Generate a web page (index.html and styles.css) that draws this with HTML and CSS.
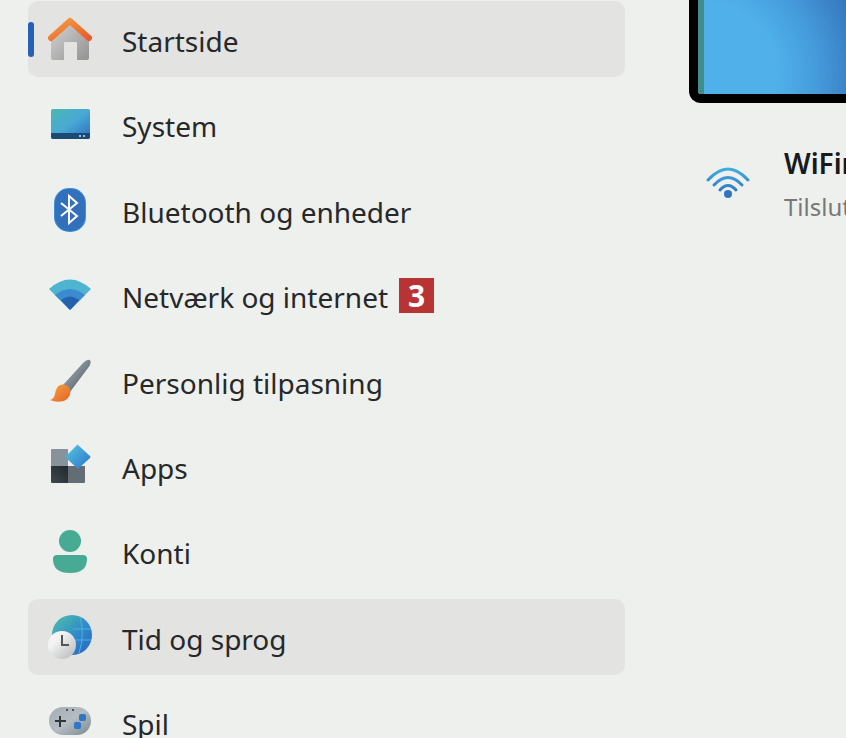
FILE: index.html
```
<!DOCTYPE html>
<html lang="da">

<head>
  <meta charset="UTF-8">
  <meta name="viewport" content="width=device-width, initial-scale=1.0">
  <title>Indstillinger</title>
  <link rel="stylesheet" href="styles.css">
</head>

<body>
<div class="settings">
  <nav class="menu">
    <a class="item active" href="#">
      <svg class="icon" viewBox="0 0 44 44">
        <defs>
          <linearGradient id="wall" x1="0" y1="0" x2="1" y2="1">
            <stop offset="0" stop-color="#d6d6d6"/><stop offset="1" stop-color="#929292"/>
          </linearGradient>
          <linearGradient id="roof" x1="0" y1="0" x2="1" y2="1">
            <stop offset="0" stop-color="#f0a040"/><stop offset="1" stop-color="#ec5a2c"/>
          </linearGradient>
        </defs>
        <path d="M3 20 22 4l19 16v21q0 2-2 2H29V26q0-1-1-1H17q-1 0-1 1v17H5q-2 0-2-2z" fill="url(#wall)"/>
        <path d="M3 21 22 4l19 17" fill="none" stroke="url(#roof)" stroke-width="6" stroke-linecap="round" stroke-linejoin="round"/>
      </svg>
      <span>Startside</span>
    </a>
    <a class="item" href="#">
      <svg class="icon" viewBox="0 0 44 44">
        <defs>
          <linearGradient id="screen" x1="0" y1="0" x2="1" y2="1">
            <stop offset="0" stop-color="#4ab8b2"/><stop offset=".5" stop-color="#48a9d4"/><stop offset="1" stop-color="#2e6dc0"/>
          </linearGradient>
        </defs>
        <rect x="3" y="7" width="39" height="30" rx="2" fill="url(#screen)"/>
        <path d="M3 31h39v4q0 2-2 2H5q-2 0-2-2z" fill="#1c4a74"/>
        <path d="M31 34h2m2 0h2" stroke="#8fc3e0" stroke-width="2"/>
      </svg>
      <span>System</span>
    </a>
    <a class="item" href="#">
      <svg class="icon" viewBox="0 0 44 44">
        <rect x="6" y="0" width="32" height="44" rx="15" fill="#3c93d8"/>
        <rect x="7" y="1" width="30" height="42" rx="14" fill="#3270bc"/>
        <path d="M13 15 29 28l-8 7V8l8 7-16 13" fill="none" stroke="#fff" stroke-width="2"/>
      </svg>
      <span>Bluetooth og enheder</span>
    </a>
    <a class="item" href="#">
      <svg class="icon" viewBox="0 0 44 44">
        <path d="M1 16Q22-3 43 16L23 36q-1 1-2 0z" fill="#4fb4d0"/>
        <path d="M7 22Q22 10 37 22L23 36q-1 1-2 0z" fill="#3c8bd0"/>
        <path d="M13 27q9-7 18 0l-8 9q-1 1-2 0z" fill="#2560ad"/>
      </svg>
      <span>Netværk og internet</span>
      <b class="badge">3</b>
    </a>
    <a class="item" href="#">
      <svg class="icon" viewBox="0 0 44 44">
        <defs>
          <linearGradient id="handle" x1="0" y1="0" x2="1" y2="1">
            <stop offset=".2" stop-color="#9ba6ac"/><stop offset=".8" stop-color="#59646c"/>
          </linearGradient>
          <linearGradient id="bristle" x1="0" y1="0" x2="1" y2="1">
            <stop offset="0" stop-color="#f3a63c"/><stop offset="1" stop-color="#e85f2c"/>
          </linearGradient>
        </defs>
        <path d="M15 26 35 4q4-4 7-3 2 3-2 8L22 33z" fill="url(#handle)"/>
        <path d="M12 26q6-2 10 4 2 8-6 12-8 2-14-1 4-1 5-6 1-7 5-9z" fill="url(#bristle)"/>
      </svg>
      <span>Personlig tilpasning</span>
    </a>
    <a class="item" href="#">
      <svg class="icon" viewBox="0 0 44 44">
        <defs>
          <linearGradient id="tile-dark" x1="0" y1="1" x2="1" y2="0">
            <stop offset="0" stop-color="#41494f"/><stop offset="1" stop-color="#20282e"/>
          </linearGradient>
          <linearGradient id="tile-blue" x1="0" y1="0" x2="1" y2="1">
            <stop offset=".2" stop-color="#4cb9dc"/><stop offset="1" stop-color="#2d72cc"/>
          </linearGradient>
        </defs>
        <path d="M3 22V6q0-1 1-1h16v17z" fill="#87929a"/>
        <path d="M3 22h17v17H4q-1 0-1-1z" fill="url(#tile-dark)"/>
        <path d="M20 22h17v16q0 1-1 1H20z" fill="#626d75"/>
        <path d="m30 1 12 11q1 1 0 2L31 24q-1 1-2 0L18 14q-1-1 0-2L29 1q0-1 1 0z" fill="url(#tile-blue)"/>
      </svg>
      <span>Apps</span>
    </a>
    <a class="item" href="#">
      <svg class="icon" viewBox="0 0 44 44">
        <circle cx="22" cy="12" r="11" fill="#47aa92"/>
        <path d="M9 26h26q4 0 4 4 0 14-17 14T5 30q0-4 4-4z" fill="#47aa92"/>
      </svg>
      <span>Konti</span>
    </a>
    <a class="item hover" href="#">
      <svg class="icon" viewBox="0 0 44 44">
        <defs>
          <linearGradient id="globe" x1="0" y1="0" x2="1" y2="1">
            <stop offset=".2" stop-color="#45afb3"/><stop offset=".6" stop-color="#2f86cc"/><stop offset="1" stop-color="#2564bd"/>
          </linearGradient>
          <linearGradient id="clock" x1="0" y1="0" x2="1" y2="1">
            <stop offset=".3" stop-color="#f4f4f4"/><stop offset="1" stop-color="#b4b6b8"/>
          </linearGradient>
        </defs>
        <circle cx="24" cy="20" r="20" fill="url(#globe)"/>
        <path d="M25 14h18M25 25h18M32 2q5 18-1 36" fill="none" stroke="#4fb0dc" stroke-width="1"/>
        <circle cx="14" cy="30" r="14" fill="url(#clock)"/>
        <path d="M14 20v10h7" fill="none" stroke="#555" stroke-width="2"/>
      </svg>
      <span>Tid og sprog</span>
    </a>
    <a class="item" href="#">
      <svg class="icon" viewBox="0 0 44 44">
        <defs>
          <linearGradient id="pad" x1="0" y1="0" x2="1" y2="1">
            <stop offset="0" stop-color="#a4adb3"/><stop offset=".5" stop-color="#b5bdc3"/><stop offset="1" stop-color="#7b878f"/>
          </linearGradient>
        </defs>
        <rect x="1" y="7" width="42" height="28" rx="14" fill="url(#pad)"/>
        <path d="M12 16v11M7 21h11" stroke="#30363a" stroke-width="2"/>
        <path d="M18 10h2m4 0h2" stroke="#4b5358" stroke-width="2"/>
        <rect x="31" y="14" width="7" height="7" rx="2" fill="#2f76c6"/>
        <rect x="26" y="22" width="7" height="7" rx="2" fill="#2f76c6"/>
      </svg>
      <span>Spil</span>
    </a>
  </nav>

  <main class="content">
    <div class="monitor">
      <div class="wallpaper"></div>
    </div>
    <div class="network">
      <svg class="wifi" viewBox="0 0 44 32">
        <defs>
          <linearGradient id="signal" x1="0" y1="0" x2="0" y2="32" gradientUnits="userSpaceOnUse">
            <stop offset="0" stop-color="#42b0e2"/><stop offset="1" stop-color="#2a68ba"/>
          </linearGradient>
        </defs>
        <g fill="none" stroke="url(#signal)" stroke-width="3" stroke-linecap="round">
          <path d="M2 13Q22-9 42 13"/>
          <path d="M8 18q14-15 28 0"/>
          <path d="M14 23q8-9 16 0"/>
        </g>
        <circle cx="22" cy="27" r="4" fill="#2f74c4"/>
      </svg>
      <div class="info">
        <p class="name">WiFir</p>
        <p class="status">Tilslut</p>
      </div>
    </div>
  </main>
</div>
</body>

</html>
```
FILE: styles.css
```
body {
  margin: 0;
  height: 100vh;
  overflow: hidden;
  background: #eef0ed;
  color: #26282a;
  font-family: "Noto Sans", sans-serif;
  font-size: 28px;
}

.settings {
  display: flex;
  gap: 64px;
}

/* menu */
.menu {
  flex: 1;
  display: flex;
  flex-direction: column;
  justify-content: space-between;
  min-height: 759px;
  padding: 1px 0 0 28px;
}
.item {
  position: relative;
  display: flex;
  align-items: center;
  height: 76px;
  padding-left: 20px;
  border-radius: 10px;
  color: inherit;
  line-height: 40px;
  text-decoration: none;
  white-space: nowrap;
}
.item span {
  padding: 4px 0 0 30px;
}
.active,
.hover {
  background: #e3e3e2;
}
.active::before {
  content: "";
  position: absolute;
  left: 0;
  top: 21px;
  width: 6px;
  height: 35px;
  border-radius: 3px;
  background: #2560b4;
}
.icon {
  width: 44px;
  height: 44px;
}
.badge {
  width: 35px;
  height: 35px;
  margin-left: 11px;
  background: #b83434;
  color: #fff;
  font-size: 30px;
  line-height: 35px;
  text-align: center;
}

/* right side */
.content {
  flex: none;
  width: 157px;
  overflow: hidden;
}
.monitor {
  height: 94px;
  border: solid #000;
  border-width: 0 0 9px 9px;
  border-bottom-left-radius: 12px;
}
.wallpaper {
  height: 94px;
  border-left: 6px solid #3f8c89;
  border-bottom-left-radius: 3px;
  background: radial-gradient(circle at 0 80%, #50b1ea 45%, #459bdb 70%, #3676bd 100%);
  box-sizing: border-box;
}
.network {
  display: flex;
  gap: 34px;
  padding: 38px 0 0 17px;
}
.wifi {
  flex: none;
  width: 44px;
  height: 32px;
  margin-top: 26px;
}
.info p {
  margin: 0;
  white-space: nowrap;
}
.name {
  color: #17191b;
  font-size: 28px;
  font-weight: 600;
  line-height: 44px;
}
.status {
  color: #777;
  font-size: 24px;
  line-height: 44px;
}
```
